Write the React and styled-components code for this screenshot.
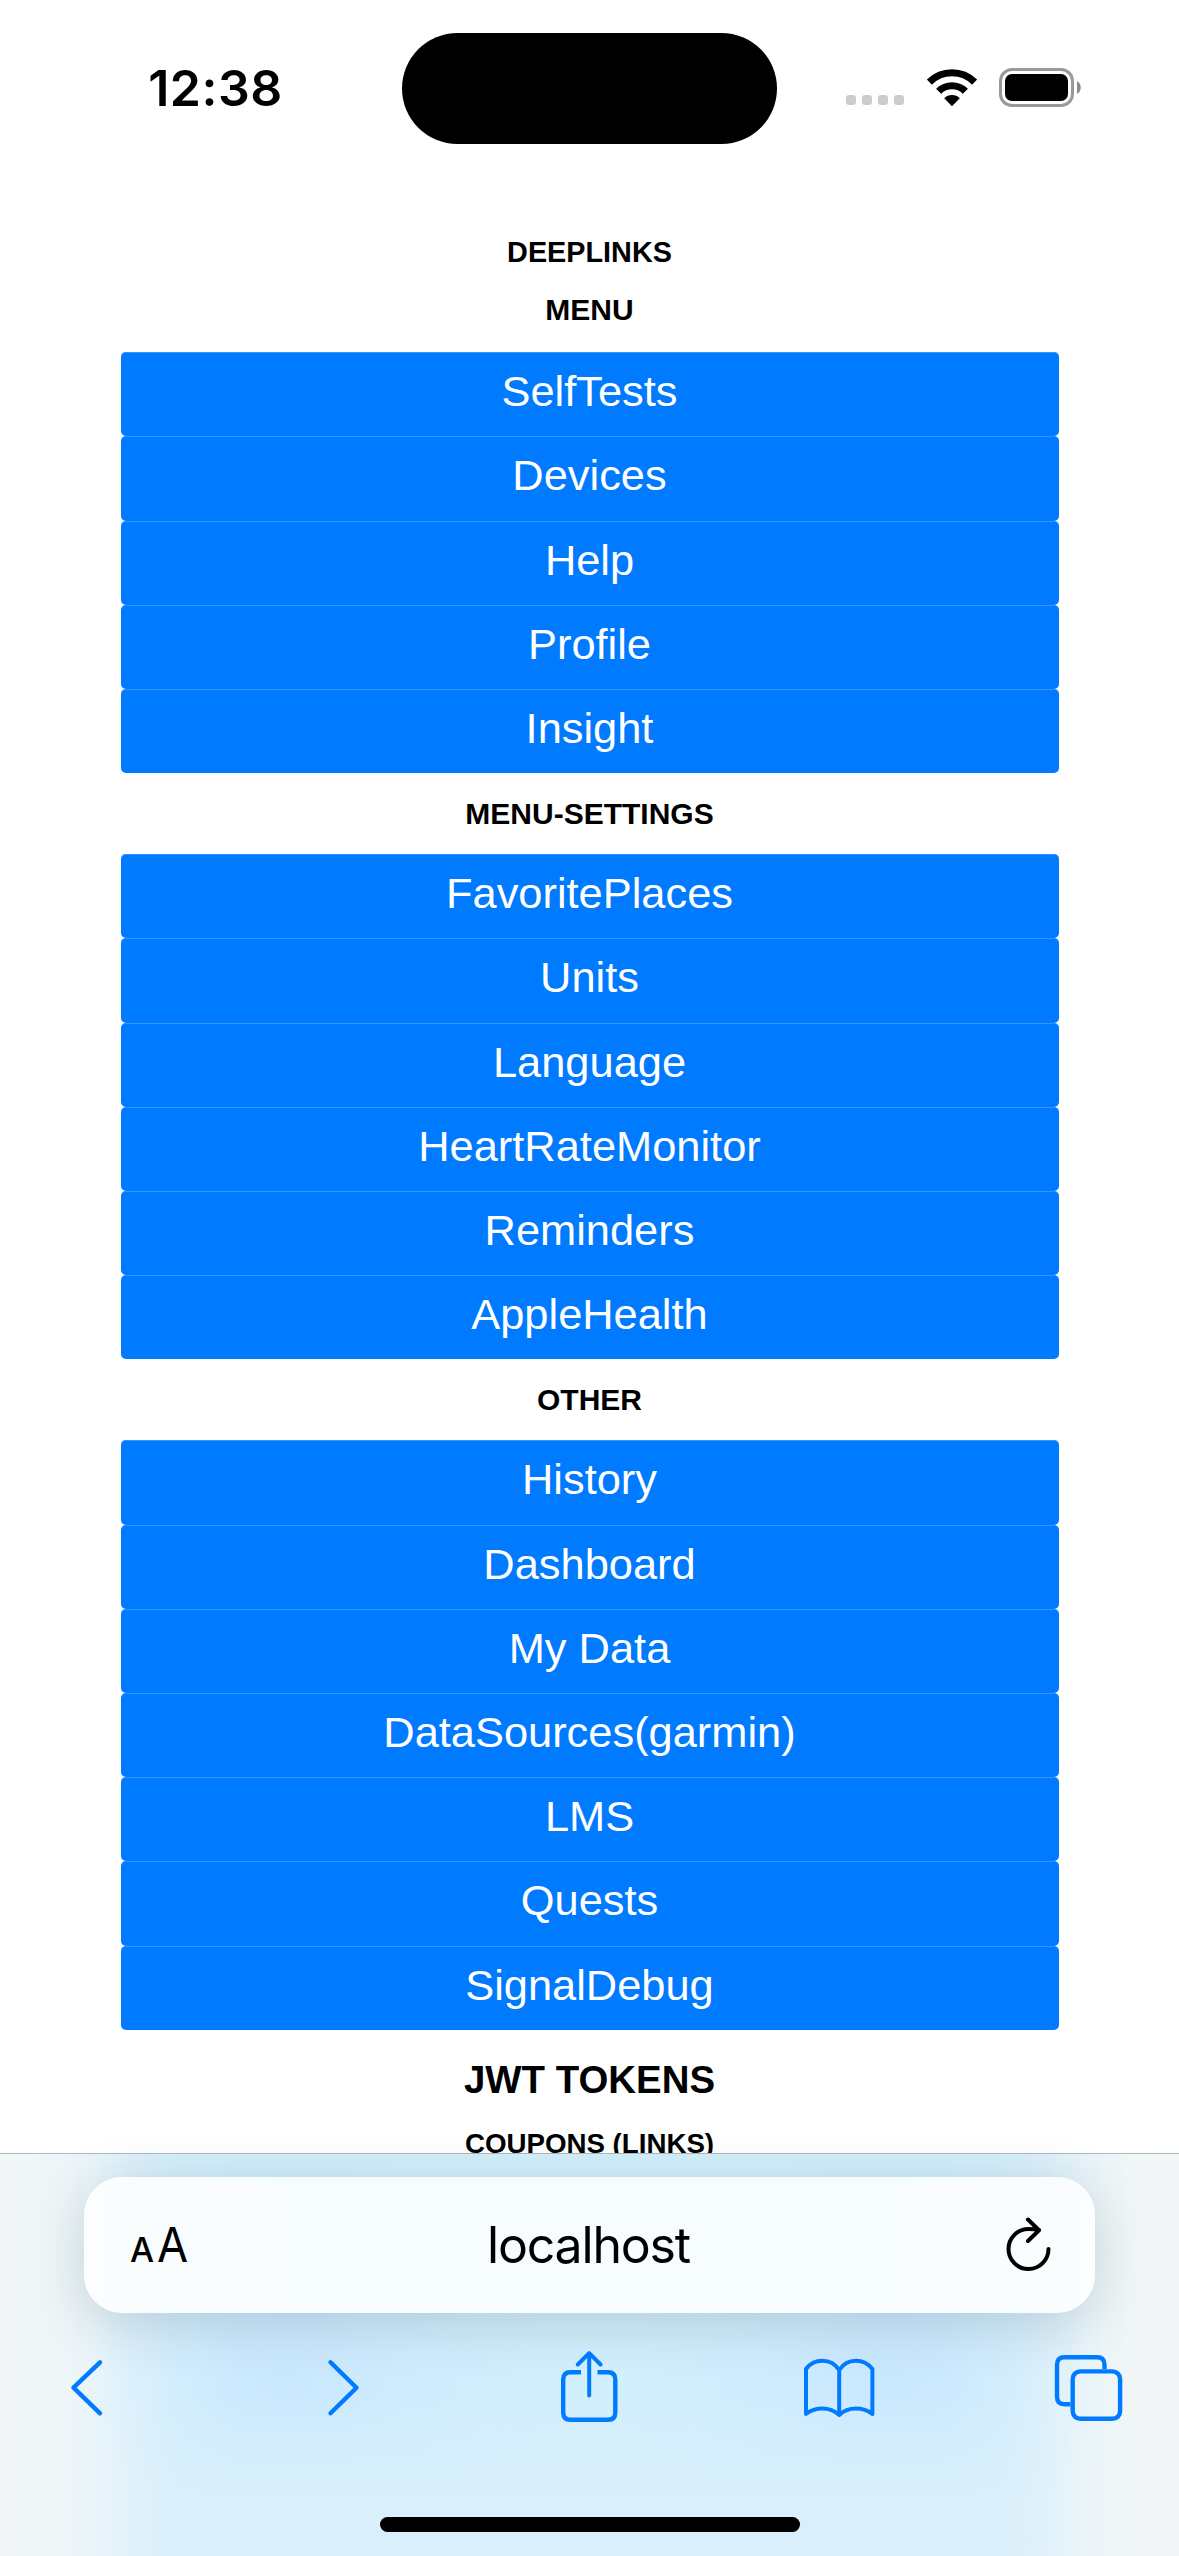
import React from "react";
import styled, { createGlobalStyle } from "styled-components";

const GlobalStyle = createGlobalStyle`
  * { box-sizing: border-box; }
  body { margin: 0; background: #fff; }
`;

const Screen = styled.div`
  display: flex;
  flex-direction: column;
  width: 1179px;
  height: 2556px;
  overflow: hidden;
  background: #fff;
  font-family: "Liberation Sans", Arial, sans-serif;
  color: #000;
`;

const StatusBar = styled.header`
  display: grid;
  grid-template-columns: 402px 375px 1fr;
  align-items: center;
  flex: none;
  height: 177px;
`;

const Clock = styled.div`
  padding: 0 0 1px 29px;
  text-align: center;
  font: 600 50px/60px Inter, sans-serif;
  letter-spacing: 0.5px;
`;

const Island = styled.div`
  height: 111px;
  border-radius: 56px;
  background: #000;
`;

const StatusIcons = styled.div`
  display: flex;
  align-items: flex-end;
  height: 39px;
  padding: 0 0 0 69px;
  margin-bottom: 2px;
`;

const SignalDots = styled.div`
  display: flex;
  gap: 6px;
  margin: 0 21.5px 2px 0;
`;

const Dot = styled.span`
  width: 10px;
  height: 10px;
  border-radius: 3px;
  background: #ccc;
`;

const Icon = styled.svg`
  display: block;
  flex: none;
  fill: none;
  overflow: visible;
`;

const Battery = styled(Icon)`
  margin-left: 21px;
`;

const Page = styled.main`
  flex: none;
  height: 1976px;
  padding: 0 120.5px;
  overflow: hidden;
`;

const Heading = styled.h2`
  margin: 0;
  padding-top: ${(p) => p.$top}px;
  height: ${(p) => p.$height}px;
  font-size: ${(p) => p.$size}px;
  line-height: 34px;
  font-weight: 700;
  text-align: center;
  white-space: nowrap;
`;

const LinkButton = styled.button`
  display: block;
  width: 100%;
  height: 84.23px;
  margin: 0;
  padding: 0 0 6px;
  border: 0;
  border-radius: 5px;
  background: #007aff;
  box-shadow: inset 0 1px 0 #3395ff;
  color: #fff;
  font: 400 43.4px/78px "Liberation Sans", Arial, sans-serif;
  text-align: center;
`;

const BrowserBar = styled.footer`
  position: relative;
  display: flex;
  flex-direction: column;
  align-items: center;
  flex: none;
  height: 403px;
  padding: 23px 0 24px;
  border-top: 1px solid #a9b9c1;
  background:
    linear-gradient(to right, #f2f6f7 0, #f0f6f8 50px, rgba(238, 246, 249, 0.85) 90px, rgba(230, 243, 250, 0.6) 130px, rgba(220, 240, 251, 0.3) 175px, rgba(215, 239, 252, 0) 235px, rgba(215, 239, 252, 0) 944px, rgba(220, 240, 251, 0.3) 1004px, rgba(230, 243, 250, 0.6) 1049px, rgba(238, 246, 249, 0.85) 1089px, #f1f6f7 1129px, #f3f6f7 100%),
    linear-gradient(to bottom, rgba(217, 239, 251, 0) 60%, #d9effb 85%),
    radial-gradient(ellipse 270px 230px at 285px 220px, #c9e8ff 0%, rgba(205, 235, 255, 0.7) 45%, rgba(210, 239, 253, 0) 100%),
    radial-gradient(ellipse 270px 230px at 894px 220px, #c9e8ff 0%, rgba(205, 235, 255, 0.7) 45%, rgba(210, 239, 253, 0) 100%),
    #d2effc;
`;

const AddressField = styled.div`
  display: grid;
  grid-template-columns: 150px 1fr 150px;
  align-items: center;
  flex: none;
  width: 1011px;
  height: 136px;
  border-radius: 38px;
  background: linear-gradient(to right, #fbfdfe, #f7fcff 22%, #f7fcff 78%, #fbfdfe);
  box-shadow: 0 10px 56px rgba(0, 30, 40, 0.16);
`;

const TextSize = styled.div`
  display: flex;
  align-items: baseline;
  gap: 3px;
  padding: 4px 0 0 46px;
  font: 500 34px/60px Inter, sans-serif;
`;

const LargeLetter = styled.span`
  font-size: 48px;
  font-weight: 400;
  transform: scaleX(0.94);
  transform-origin: left;
`;

const Host = styled.div`
  text-align: center;
  padding: 0 2px 1px 0;
  font: 400 50px/60px Inter, sans-serif;
  letter-spacing: -1.2px;
`;

const Reload = styled(Icon)`
  margin: 2px 0 0 59px;
`;

const Toolbar = styled.nav`
  display: grid;
  grid-template-columns: 257px 235px 243px 251px 70px;
  align-self: stretch;
  flex: none;
  height: 76px;
  margin-top: 35px;
  padding-left: 68px;
`;

const HomeIndicator = styled.div`
  flex: none;
  width: 420px;
  height: 15px;
  margin-top: auto;
  border-radius: 8px;
  background: #000;
`;

const stroke = { stroke: "#007aff", strokeWidth: 4.4, strokeLinecap: "round", strokeLinejoin: "round" };

const groups = [
  { title: "MENU", top: 0, height: 59.1, links: ["SelfTests", "Devices", "Help", "Profile", "Insight"] },
  { title: "MENU-SETTINGS", top: 23.5, height: 80.9, links: ["FavoritePlaces", "Units", "Language", "HeartRateMonitor", "Reminders", "AppleHealth"] },
  { title: "OTHER", top: 23.5, height: 80.9, links: ["History", "Dashboard", "My Data", "DataSources(garmin)", "LMS", "Quests", "SignalDebug"] },
];

export default function App() {
  return (
    <Screen>
      <GlobalStyle />
      <StatusBar>
        <Clock>12:38</Clock>
        <Island />
        <StatusIcons>
          <SignalDots>
            <Dot /><Dot /><Dot /><Dot />
          </SignalDots>
          <Icon width="52" height="39" viewBox="0 0 52 39">
            <path d="M3.4 14.1a32 32 0 0 1 45.2 0" stroke="#000" strokeWidth="7.2" />
            <path d="M12.6 23.3a19 19 0 0 1 26.8 0" stroke="#000" strokeWidth="7.2" />
            <path d="M26 38.2 18.2 30.2a11 11 0 0 1 15.6 0z" fill="#000" />
          </Icon>
          <Battery width="83" height="39" viewBox="0 0 83 39">
            <rect x="1.5" y="1.5" width="72" height="36" rx="11.5" stroke="#999" strokeWidth="3" />
            <rect x="6" y="6" width="63" height="27" rx="7" fill="#000" />
            <path d="M78 13c5 2.400 5 10.600 0 13z" fill="#8a8a8a" />
          </Battery>
        </StatusIcons>
      </StatusBar>

      <Page>
        <Heading $size={28.8} $top={57.5} $height={116}>DEEPLINKS</Heading>
        {groups.map((g) => (
          <React.Fragment key={g.title}>
            <Heading $size={30} $top={g.top} $height={g.height}>{g.title}</Heading>
            {g.links.map((label) => (
              <LinkButton key={label}>{label}</LinkButton>
            ))}
          </React.Fragment>
        ))}
        <Heading $size={38.4} $top={33} $height={97}>JWT TOKENS</Heading>
        <Heading $size={27.7} $top={0} $height={40}>COUPONS (LINKS)</Heading>
      </Page>

      <BrowserBar>
        <AddressField>
          <TextSize>A<LargeLetter>A</LargeLetter></TextSize>
          <Host>localhost</Host>
          <Reload width="50" height="58" viewBox="0 0 50 58">
            <path d="M44.500 32A20 20 0 1 1 24.500 12Q30 12 35 13M24 2.500 35 13.300 24 24" stroke="#000" strokeWidth="4" strokeLinecap="round" strokeLinejoin="round" />
          </Reload>
        </AddressField>
        <Toolbar>
          <Icon width="36" height="76" viewBox="68 2348 36 76">
            <path d="M100 2362.300 73.500 2387.700 100 2413.300" {...stroke} />
          </Icon>
          <Icon width="36" height="76" viewBox="325 2348 36 76">
            <path d="M330.500 2362.300 356.500 2387.700 330.500 2413.300" {...stroke} />
          </Icon>
          <Icon width="58" height="76" viewBox="560 2348 58 76">
            <path d="M581 2372.200H570.500Q563.200 2372.200 563.200 2379.500V2412.500Q563.200 2419.800 570.500 2419.800H608Q615.300 2419.800 615.300 2412.500V2379.500Q615.300 2372.200 608 2372.200H597.500" {...stroke} strokeLinecap="butt" />
            <path d="M589.200 2395.500V2353.500M577.800 2364.500 589.200 2353.200 600.600 2364.500" {...stroke} strokeWidth="4" />
          </Icon>
          <Icon width="73" height="76" viewBox="803 2348 73 76">
            <path d="M839.200 2414V2370Q833 2360.800 822.500 2360.800T806 2369V2414Q813 2408.500 822.500 2408.500T839.200 2415Q846 2408.500 855.700 2408.500T872.400 2414V2369Q866 2360.800 855.700 2360.800T839.200 2370" {...stroke} strokeWidth="4" />
          </Icon>
          <Icon width="70" height="76" viewBox="1054 2348 70 76">
            <path d="M1070.500 2404.300H1064.500Q1057 2404.300 1057 2396.800V2364.700Q1057 2357.200 1064.500 2357.200H1097Q1104.500 2357.200 1104.500 2364.700V2369" {...stroke} strokeLinecap="butt" />
            <rect x="1072.700" y="2371.400" width="47.400" height="47.400" rx="7.500" {...stroke} />
          </Icon>
        </Toolbar>
        <HomeIndicator />
      </BrowserBar>
    </Screen>
  );
}
